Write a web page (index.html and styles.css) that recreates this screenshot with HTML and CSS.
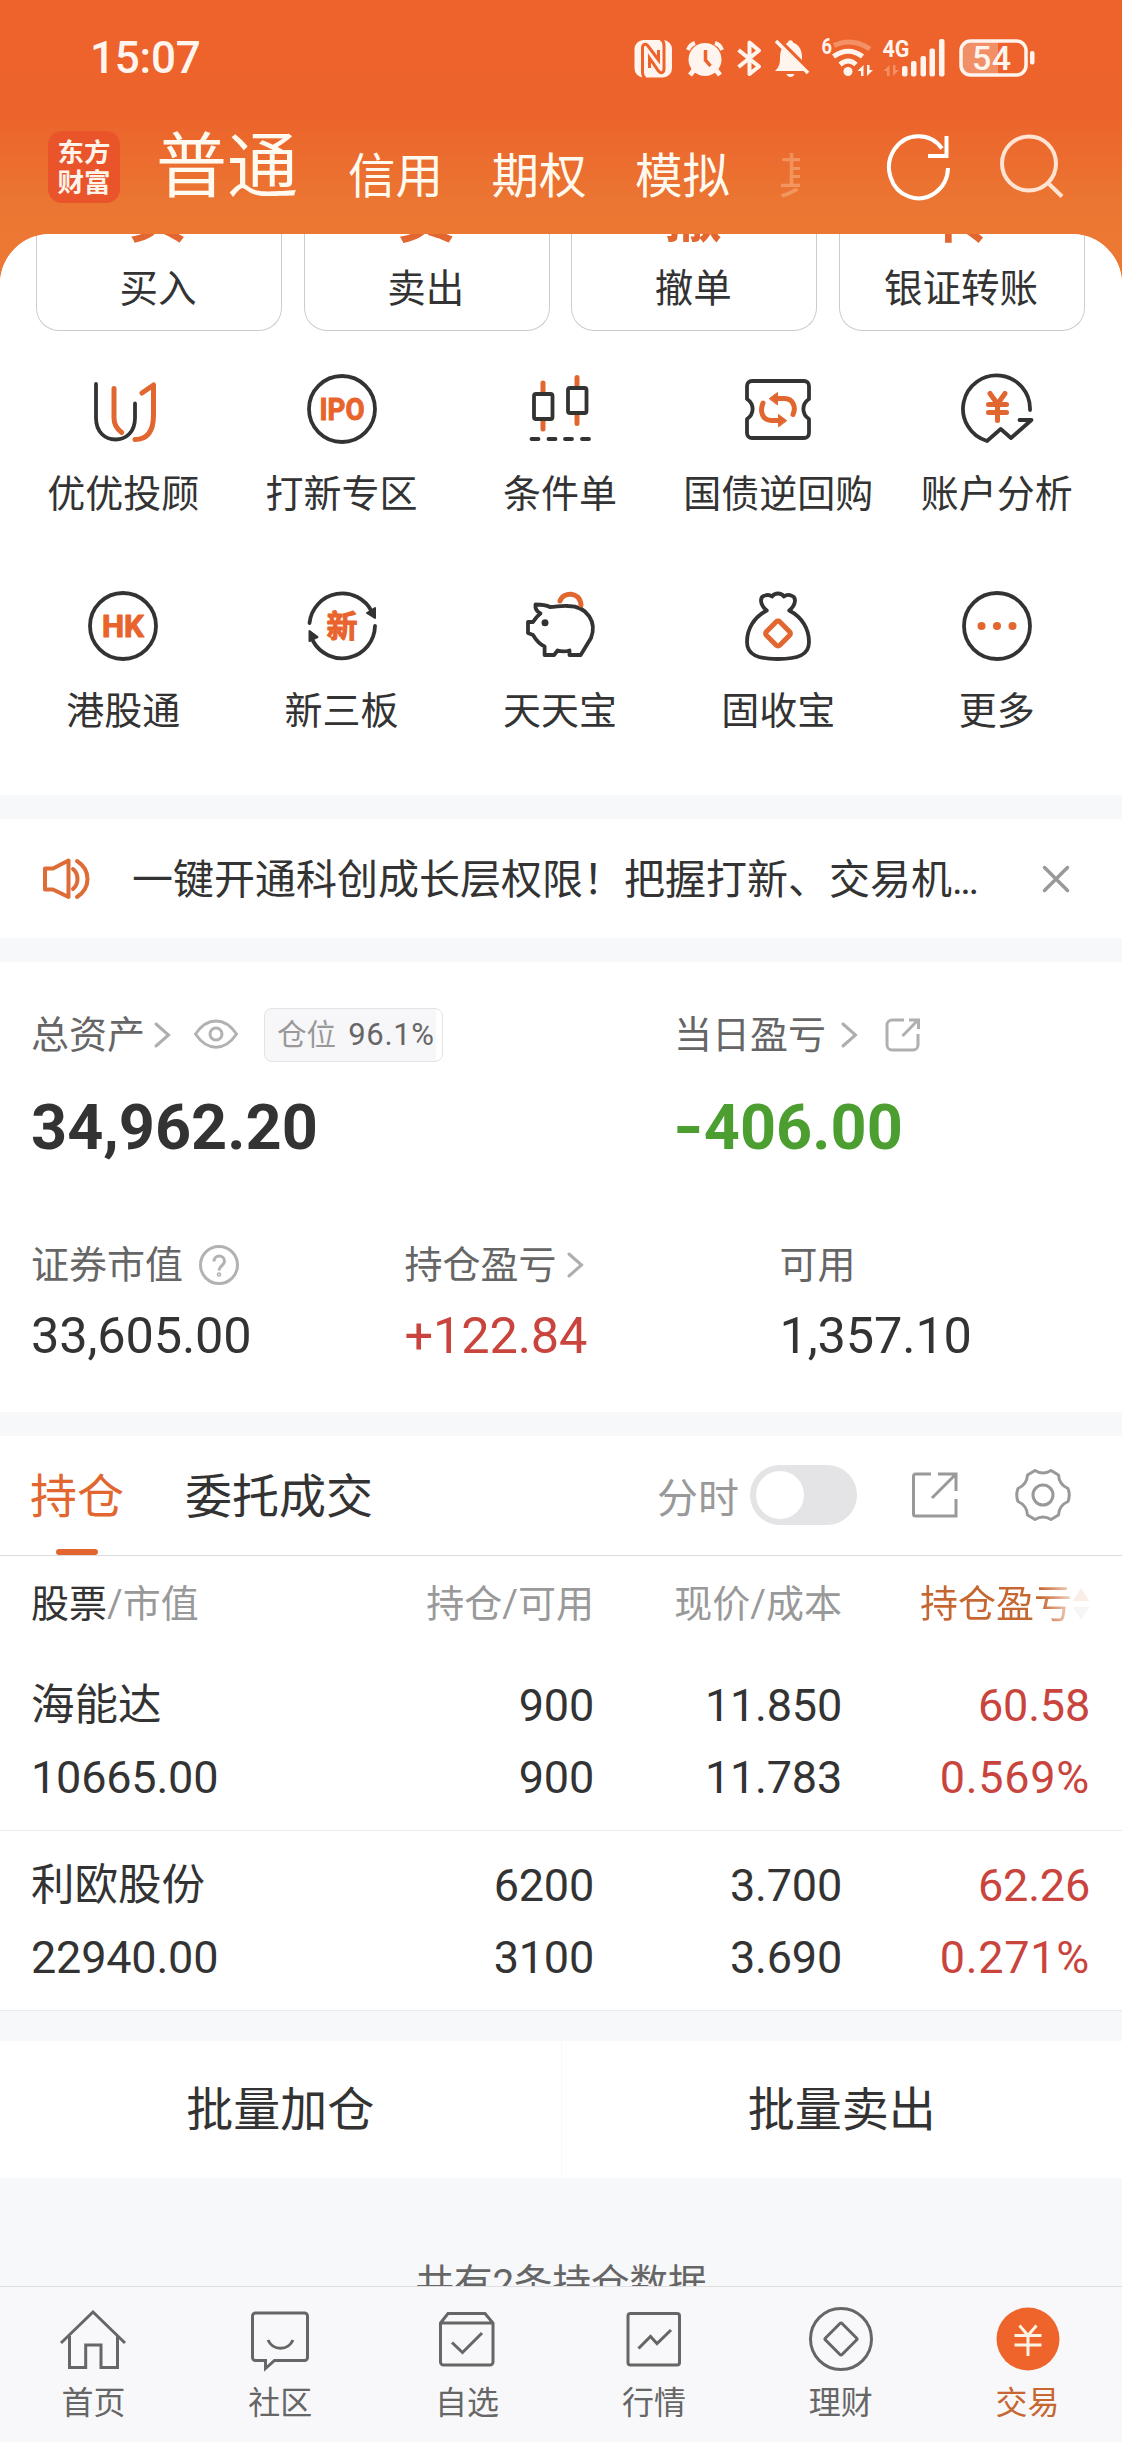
FILE: index.html
```html
<!DOCTYPE html>
<html lang="zh-CN">
<head>
<meta charset="utf-8">
<title>交易</title>
<link rel="stylesheet" href="styles.css">
</head>
<body>
<div class="app">
  <div class="status">
    <span class="clock">15:07</span>
    <svg class="status-icons" width="412" height="55" viewBox="0 0 412 55" fill="none">
      <rect x="9.5" y="10" width="37.5" height="37.5" rx="9" fill="#fff4ee"/>
      <path d="M20.500 48c-2.500-1-3-3-3-6V18c0-4 3-5 5.500-2L33.500 30V20" stroke="#ed632b" stroke-width="3"/>
      <path d="M35.500 9.500c3 1 3.500 3 3.500 6V39c0 4-3 5-5.500 2L24.500 28V38" stroke="#ed632b" stroke-width="3"/>
      <circle cx="80" cy="29.500" r="16.500" fill="#fff4ee"/>
      <path d="M63 20a11 11 0 0 1 7-7M97 20a11 11 0 0 0-7-7" stroke="#fff4ee" stroke-width="4"/>
      <path d="M69 40l-4 5M91 40l4 5" stroke="#fff4ee" stroke-width="5"/>
      <path d="M80.500 20v10l5 6" stroke="#ed632b" stroke-width="3.500"/>
      <path d="M113.500 20L134 36.500L124.500 44V12.500L134 20.500L113.500 37" stroke="#fff4ee" stroke-width="4" stroke-linejoin="round"/>
      <path d="M150 41c4-4 5-7 5-13 0-8 3-13 8-15.500 0-3 5-3 5 0 6 2.500 9 7 9 15v7c1 3 1 4 3 6.500z" fill="#fff4ee"/>
      <path d="M161.500 44h8c-1 4-7 4-8 0z" fill="#fff4ee"/>
      <path d="M152 8l34 34" stroke="#ed632b" stroke-width="4"/>
      <path d="M151 11l32 32" stroke="#fff4ee" stroke-width="3.500"/>
      <text x="196.500" y="23.500" font-size="22" font-weight="700" fill="#fff4ee" textLength="10.500" lengthAdjust="spacingAndGlyphs">6</text>
      <path d="M209 15.500q18-8.500 36 3.500" stroke="#f39065" stroke-width="5"/>
      <path d="M208.500 26.500q15-10.500 29 0" stroke="#fff4ee" stroke-width="5"/>
      <path d="M215 34.500q8.500-7 16 0" stroke="#fff4ee" stroke-width="5"/>
      <circle cx="223" cy="41.500" r="4.500" fill="#fff4ee"/>
      <path d="M232.500 41l6-6v11h-2.500v-5zM248 40l-6 6V35h2.500v5z" fill="#fff4ee"/>
      <text x="257.500" y="27" font-size="24" font-weight="700" fill="#fff4ee" textLength="27" lengthAdjust="spacingAndGlyphs">4G</text>
      <path d="M258.500 41l6-6v11H262v-5zM274 40l-6 6V35h2.500v5z" fill="#f39065"/>
      <g fill="#fff4ee">
        <rect x="277" y="36" width="5.500" height="10.500" rx="2"/><rect x="286" y="31" width="5.500" height="15.500" rx="2"/><rect x="295.500" y="26" width="5.500" height="20.500" rx="2"/><rect x="304.500" y="18.500" width="5.500" height="28" rx="2"/><rect x="314" y="9" width="5.500" height="37.500" rx="2"/>
        <rect x="405" y="21" width="4.500" height="13.500" rx="2"/>
      </g>
      <path d="M346 11h27v34h-27a9 9 0 0 1-9-9V20a9 9 0 0 1 9-9z" fill="#f18f66"/>
      <rect x="336" y="11" width="65" height="34" rx="9.500" stroke="#fff4ee" stroke-width="3.500"/>
      <text x="347" y="40" font-size="34" font-weight="500" fill="#fff4ee" textLength="39">54</text>
    </svg>
  </div>

  <div class="topbar">
    <div class="logo"><span>东方</span><span>财富</span></div>
    <div class="modes">
      <span class="mode mode-on">普通</span>
      <span class="mode">信用</span>
      <span class="mode">期权</span>
      <span class="mode">模拟</span>
      <span class="mode mode-fade">其</span>
    </div>
    <svg class="refresh" width="68" height="72" viewBox="0 0 68 72" fill="none" stroke="#fff" stroke-width="4">
      <path d="M63 37A29.500 31 0 1 1 57 17.500"/><path d="M61.500 5V25H43" />
    </svg>
    <svg class="search" width="68" height="72" viewBox="0 0 68 72" fill="none" stroke="#ffe3d3" stroke-width="4">
      <circle cx="30" cy="32.500" r="27"/><path d="M49 52L63 65.500"/>
    </svg>
  </div>

  <main class="sheet">
    <section class="entries">
      <div class="cards">
        <div class="card"><b>买</b><span>买入</span></div>
        <div class="card"><b>卖</b><span>卖出</span></div>
        <div class="card"><b>撤</b><span>撤单</span></div>
        <div class="card"><b>转</b><span>银证转账</span></div>
      </div>
      <div class="grid">
        <div class="cell">
          <svg class="ico" viewBox="0 0 76 76"><path d="M11 13V47C11 61 20 68.500 30.500 68.500S50 61 50 47V32.500"/><g class="or"><path d="M29 17.500V47c0 7 3 11 7.700 14.500M57 22L68.500 14V44C68.500 59 63 68.500 50 68.500"/></g></svg>
          <span>优优投顾</span>
        </div>
        <div class="cell">
          <svg class="ico" viewBox="0 0 76 76"><circle cx="38" cy="38" r="33"/><text class="tx" x="15.500" y="49" font-size="30.500" textLength="45" lengthAdjust="spacingAndGlyphs">IPO</text></svg>
          <span>打新专区</span>
        </div>
        <div class="cell">
          <svg class="ico" viewBox="0 0 76 76"><g class="or"><path d="M21 12V21M21 49v9M55 6.500v9M55 43v9.500"/></g><rect x="12" y="23" width="18.500" height="25" rx="2"/><rect x="46" y="17" width="18.500" height="25" rx="2"/><path d="M9.500 68h7M26.500 68h7M43 68h7M60 68h7"/></svg>
          <span>条件单</span>
        </div>
        <div class="cell">
          <svg class="ico" viewBox="0 0 76 76"><path d="M12 10H64a5 5 0 0 1 5 5V28c-7.500 5-7.500 15 0 20V62a5 5 0 0 1-5 5H12a5 5 0 0 1-5-5V48c7.500-5 7.500-15 0-20V15a5 5 0 0 1 5-5z"/><g class="or"><path d="M38 27.500h6.500c8 0 12 8 8.500 16"/><path d="M38 49.500h-6.500c-9 0-12-9-8.500-17.500"/></g><path class="fo" d="M29.500 27.500l8-6v12zM46.500 49.500l-8-6v12z"/></svg>
          <span>国债逆回购</span>
        </div>
        <div class="cell">
          <svg class="ico" viewBox="0 0 76 76"><path d="M60.500 49H72.500L52 67L41.700 58L28 70A33.500 33.500 0 1 1 71 39"/><g class="or"><path d="M31 22.500l7.500 10.500 7.500-10.500M38.500 33V49.500M29.500 33.500h18M29.500 41.500h18"/></g></svg>
          <span>账户分析</span>
        </div>
        <div class="cell">
          <svg class="ico" viewBox="0 0 76 76"><circle cx="38" cy="38" r="33"/><text class="tx" x="17" y="49" font-size="30.500" textLength="42" lengthAdjust="spacingAndGlyphs">HK</text></svg>
          <span>港股通</span>
        </div>
        <div class="cell">
          <svg class="ico" viewBox="0 0 76 76"><path d="M5.500 35A33 33 0 0 1 68 24M71 38A33 33 0 0 1 9 53"/><path class="fd" d="M71 20v10l-8-5zM5.500 43v10l8-4z"/><text class="tx" x="22.500" y="49" font-size="31">新</text></svg>
          <span>新三板</span>
        </div>
        <div class="cell">
          <svg class="ico" viewBox="0 0 76 76"><path d="M28 19C24 17 20 16.500 13.500 16.500 13 20 14 23 18.500 25.500 15 28 13 31 11 34H6V45l5 2c3 5 6 9 11.600 11.500V67h9.500l3.500-4.500C40 64 44 63.500 47.500 62.500V67H58.700L69 50C75 35 66 18 46 18 39 17.500 34 19 28 19z"/><circle class="fd" cx="23" cy="34.700" r="2.500"/><g class="or"><path d="M38 13c3-9.500 20-10 21 4"/></g></svg>
          <span>天天宝</span>
        </div>
        <div class="cell">
          <svg class="ico" viewBox="0 0 76 76"><path d="M26.800 22.500C20 17 19 9 25 7.500 28 6.500 30 7 32 8.500 35 4.500 41 4.500 44 8.500 46 7 49 6.500 51 7.500 57 9 56 17 49.200 22.500 62 29 69 41 69 54 69 67 58 71 38 71S7 67 7 54C7 41 14 29 26.800 22.500z"/><g class="or"><rect x="28.500" y="36" width="19" height="19" rx="2.500" transform="rotate(45 38 45.500)"/></g></svg>
          <span>固收宝</span>
        </div>
        <div class="cell">
          <svg class="ico" viewBox="0 0 76 76"><circle cx="38" cy="38" r="33"/><g class="fo"><circle cx="22.500" cy="38" r="4"/><circle cx="38" cy="38" r="4"/><circle cx="53.500" cy="38" r="4"/></g></svg>
          <span>更多</span>
        </div>
      </div>
    </section>

    <section class="notice">
      <svg width="50" height="46" viewBox="0 0 50 46" fill="none" stroke="#dd6c36" stroke-width="4" stroke-linejoin="round" stroke-linecap="round"><path d="M4 12.500H12L27.500 4.500V41L12 33.500H4z"/><path d="M32 13c6 5 6 15 0 20M36 5c14 9 14 27 0 36"/></svg>
      <p>一键开通科创成长层权限！把握打新、交易机<em>...</em></p>
      <svg width="30" height="30" viewBox="0 0 30 30" stroke="#999" stroke-width="3.500" stroke-linecap="round"><path d="M3.500 3.500l23 23M26.500 3.500l-23 23"/></svg>
    </section>

    <section class="assets">
      <div class="totals">
        <div>
          <div class="label"><span>总资产</span><svg class="chev c1" viewBox="0 0 18 28"><path d="M3 3l12.500 11L3 25"/></svg>
            <svg class="eye" viewBox="0 0 46 32"><path d="M2.500 16C14-1.500 32-1.500 43.500 16C32 33.500 14 33.500 2.500 16z"/><circle cx="23" cy="16" r="6"/></svg>
            <span class="badge">仓位 <em>96.1%</em></span></div>
          <div class="big">34,962.20</div>
        </div>
        <div>
          <div class="label"><span>当日盈亏</span><svg class="chev c2" viewBox="0 0 18 28"><path d="M3 3l12.500 11L3 25"/></svg>
            <svg class="share-s" viewBox="0 0 36 36"><path d="M19 3H7a5 5 0 0 0-5 5V28a5 5 0 0 0 5 5H28a5 5 0 0 0 5-5V17M24 3h9.500V12M33 3L17.500 19"/></svg></div>
          <div class="big green"><span class="minus">-</span>406.00</div>
        </div>
      </div>
      <div class="details">
        <div><div class="label"><span>证券市值</span><svg class="help" viewBox="0 0 42 42"><circle cx="21" cy="21" r="18.500"/><path d="M16 17.500c0-7.500 10.500-7 10.500-.5 0 5-5.500 4.500-5.500 9.500"/><circle cx="21" cy="30.500" r=".8"/></svg></div><div class="num">33,605.00</div></div>
        <div><div class="label"><span>持仓盈亏</span><svg class="chev c3" viewBox="0 0 18 28"><path d="M3 3l12.500 11L3 25"/></svg></div><div class="num red">+122.84</div></div>
        <div><div class="label"><span>可用</span></div><div class="num">1,357.10</div></div>
      </div>
    </section>

    <section class="positions">
      <div class="tabs">
        <span class="tab tab-on">持仓</span><span class="tab">委托成交</span>
        <span class="tick">分时</span><span class="toggle"><i></i></span>
        <svg class="share-l" viewBox="0 0 50 50"><path d="M21 3H5.500a2 2 0 0 0-2 2V43a2 2 0 0 0 2 2H46V28M46 20V3H28M46 3L22 27"/></svg>
        <svg class="gear" viewBox="0 0 58 58"><path d="M21 4.500Q29 9.500 37 4.500L44.500 9Q45 18.500 54 22.500 56.500 29 54 35.500 45 39.500 44.500 49L37 53.500Q29 48.500 21 53.500L13.500 49Q13 39.500 4 35.500 1.500 29 4 22.500 13 18.500 13.500 9z"/><circle cx="29" cy="29" r="10"/></svg>
      </div>
      <div class="row head">
        <span><b>股票</b>/市值</span><span>持仓/可用</span><span>现价/成本</span>
        <span class="sorted">持仓盈亏<svg width="18" height="32" viewBox="0 0 18 32"><path d="M9 0l8.500 13H.5z" fill="#faeee6"/><path d="M9 32l8.500-13H.5z" fill="#f6f6f6"/></svg></span>
      </div>
      <div class="row">
        <span class="name">海能达</span><span>900</span><span>11.850</span><span class="red">60.58</span>
        <span>10665.00</span><span>900</span><span>11.783</span><span class="red pct">0.569%</span>
      </div>
      <div class="row">
        <span class="name">利欧股份</span><span>6200</span><span>3.700</span><span class="red">62.26</span>
        <span>22940.00</span><span>3100</span><span>3.690</span><span class="red pct">0.271%</span>
      </div>
    </section>

    <section class="batch"><span>批量加仓</span><span>批量卖出</span></section>
    <p class="count">共有2条持仓数据</p>
  </main>

  <nav class="nav">
    <div><svg viewBox="0 0 68 68"><path d="M2 38L34 7L66 38M10.500 31V62.500H26.700V40H42V62.500H58.500V31"/></svg><span>首页</span></div>
    <div><svg viewBox="0 0 68 68"><path d="M9.500 8H58.500a3 3 0 0 1 3 3V52.500a3 3 0 0 1-3 3H28.500L19.500 63.500V55.500H9.500a3 3 0 0 1-3-3V11a3 3 0 0 1 3-3zM22 35c5 11 20 11 25 0"/></svg><span>社区</span></div>
    <div><svg viewBox="0 0 68 68"><path d="M7.500 18L15 8.500H52L60 18V57a3 3 0 0 1-3 3H10.500a3 3 0 0 1-3-3zM7.500 18H60M19 37.500L29.500 47.500L49 28"/></svg><span>自选</span></div>
    <div><svg viewBox="0 0 68 68"><rect x="8" y="8.500" width="51.500" height="51.500" rx="2.500"/><path d="M18.500 43.500L30.500 31.500L37 38.500L51 25"/></svg><span>行情</span></div>
    <div><svg viewBox="0 0 68 68"><circle cx="34" cy="34" r="30.500"/><rect x="22.300" y="22.300" width="23.400" height="23.400" rx="1.500" transform="rotate(45 34 34)"/></svg><span>理财</span></div>
    <div class="nav-on"><svg viewBox="0 0 68 68"><circle class="disc" cx="34" cy="34" r="31.500"/><path class="yen" d="M25.500 20.500L34 30.500L42.500 20.500M34 30.500V51M20.500 30.500H47.500M20.500 40H47.500"/></svg><span>交易</span></div>
  </nav>
</div>
</body>
</html>
```
FILE: styles.css
```css
* { box-sizing: border-box; }
body { margin: 0; font-family: Roboto, "Noto Sans CJK SC", sans-serif; color: #333; }
b, em { font-weight: inherit; font-style: normal; }
p { margin: 0; }
svg { display: block; flex: none; }
.app {
  width: 1122px; height: 2442px; overflow: hidden;
  display: flex; flex-direction: column;
  background: linear-gradient(#ee632b 0, #ec632b 112px, #eb7532 200px, #ec7834 240px, #ed7834 100%);
}

/* status bar */
.status { height: 100px; flex: none; display: flex; justify-content: space-between; padding: 30px 85px 0 90px; }
.clock { font-size: 44px; font-weight: 500; line-height: 57px; color: #fff4ee; letter-spacing: -.2px; }

/* top bar */
.topbar { height: 134px; flex: none; display: flex; padding-left: 48px; color: #fffaf0; }
.logo {
  width: 72px; height: 72px; margin-top: 31px; border-radius: 14px; background: #ea542b; flex: none;
  display: flex; flex-direction: column; align-items: center; justify-content: center;
  font: 700 26.500px/30px "Noto Sans CJK SC", sans-serif; color: #fff3ea; padding-bottom: 2px;
}
.modes { display: flex; width: 680px; overflow: hidden; padding: 27px 0 0 36px; white-space: nowrap; }
.mode { font-size: 47.500px; line-height: 46px; margin: 27px 48.500px 0 0; }
.mode-on { font-size: 71px; line-height: 80px; margin: 0 50px 0 0; }
.mode-fade { color: rgba(255, 220, 180, .35); }
.refresh { margin: 31px 0 0 85px; }
.search { margin: 31px 0 0 46px; }

/* content sheet */
.sheet { flex: 1; min-height: 0; overflow: hidden; background: #f7f8fa; border-radius: 50px 50px 0 0; }
.entries { background: #fff; height: 561px; }
.cards { display: grid; grid-template-columns: repeat(4, 246px); justify-content: space-between; padding: 0 37px 0 36px; }
.card {
  height: 97px; border: 1px solid #ccc; border-top: 0; border-radius: 0 0 23px 23px;
  display: flex; flex-direction: column; align-items: center; overflow: hidden; padding-right: 2px;
}
.card b { font-size: 58px; font-weight: 700; line-height: 60px; margin-top: -47px; color: #e2662f; }
.card span { font-size: 38.500px; line-height: 46px; margin-top: 19px; }
.grid { display: grid; grid-template-columns: repeat(5, 218.400px); grid-auto-rows: 217px; padding: 39.500px 14px 0; }
.cell { display: flex; flex-direction: column; align-items: center; }
.cell span { font-size: 38px; line-height: 46px; margin-top: 24px; }
.ico { width: 76px; height: 76px; fill: none; stroke: #333; stroke-width: 3.800; stroke-linecap: round; stroke-linejoin: round; }
.ico .or { stroke: #e2662f; stroke-width: 5; }
.ico .fo { fill: #e2662f; stroke: #e2662f; stroke-width: 1; }
.ico .fo circle { stroke: none; }
.ico .fd { fill: #333; stroke-width: 2; }
.ico .tx { fill: #e8642c; stroke: #e8642c; stroke-width: 1; font-weight: 700; }

/* notice */
.notice { height: 119px; margin: 24px 0; background: #fff; display: flex; align-items: center; padding: 0 0 0 41px; }
.notice p { font-size: 41px; line-height: 50px; width: 860px; margin: 2px 49px 0 41px; white-space: nowrap; }
.notice em { letter-spacing: -2.500px; }

/* assets */
.assets { background: #fff; height: 449.500px; padding: 45px 31px 0; }
.totals { display: grid; grid-template-columns: 643px 1fr; height: 229.500px; }
.details { display: grid; grid-template-columns: 373.500px 375px 1fr; }
.label { display: flex; align-items: center; height: 56px; font-size: 38px; line-height: 56px; color: #666; }
.chev { width: 18px; height: 28px; fill: none; stroke: #aeaeae; stroke-width: 3; stroke-linecap: round; }
.c1 { margin-left: 8px; }
.c2 { margin-left: 14px; }
.c3 { margin-left: 9px; }
.eye { width: 46px; height: 32px; margin: -3px 0 0 22px; fill: none; stroke: #b2b2b2; stroke-width: 3; }
.badge {
  margin-left: 25px; width: 179px; height: 54px; border: 1px solid #e3e3e6; border-radius: 8px; padding-left: 12px;
  background: linear-gradient(90deg, #f7f7fa 171px, #fff 171px); font-size: 29.500px; line-height: 51px; color: #999; white-space: nowrap;
}
.badge em { font-size: 31px; color: #666; margin-left: 5px; letter-spacing: .6px; }
.share-s { width: 36px; height: 36px; margin-left: 27px; fill: none; stroke: #b0b0b0; stroke-width: 3; }
.big { font-size: 63px; font-weight: 700; line-height: 70px; margin-top: 30px; }
.minus { display: inline-block; transform: scaleX(1.25); margin: 0 3px 0 2px; }
.help { width: 42px; height: 42px; margin-left: 15px; fill: none; stroke: #b2b2b2; stroke-width: 3; }
.num { font-size: 50.500px; line-height: 60px; margin-top: 13px; letter-spacing: -.15px; }
.big, .num { white-space: nowrap; }
.green { color: #4b9e2f; }
.red { color: #c9443d; }

/* positions */
.positions { margin-top: 24px; background: #fff; }
.tabs { height: 120px; border-bottom: 1px solid #dcdcdc; display: flex; align-items: center; padding-left: 30px; }
.tab { font-size: 47px; line-height: 121px; height: 119px; display: flex; flex-direction: column; align-items: center; margin-right: 61px; }
.tab-on { color: #e2662f; }
.tab-on::after { content: ""; width: 42px; height: 6px; border-radius: 3px; background: #e2662f; margin-top: -8px; flex: none; }
.tick { font-size: 41px; color: #999; margin-left: 223px; }
.toggle { width: 107px; height: 60px; border-radius: 30px; background: #e4e4e7; margin-left: 11px; padding: 6px; }
.toggle i { display: block; width: 48px; height: 48px; border-radius: 50%; background: #fff; }
.share-l { width: 50px; height: 50px; margin: 2px 0 0 53px; fill: none; stroke: #999; stroke-width: 3; }
.gear { width: 58px; height: 58px; margin-left: 54px; fill: none; stroke: #999; stroke-width: 3; stroke-linejoin: round; }
.row {
  display: grid; grid-template-columns: 315px repeat(3, 248px); padding: 19px 0 15px 31px; grid-auto-rows: 72px; line-height: 72px;
  height: 180px; border-bottom: 1px solid #ebebeb; font-size: 45px; letter-spacing: -.2px; text-align: right; white-space: nowrap;
}
.row > :nth-child(4n + 1) { text-align: left; }
.row .name { font-size: 43.500px; letter-spacing: 0; }
.row .pct { letter-spacing: .7px; }
.head { height: 95px; padding-top: 12px; padding-bottom: 0; border: 0; color: #999; font-size: 38px; letter-spacing: 0; }
.head b { color: #333; }
.sorted { display: flex; align-items: center; justify-content: flex-end; background: linear-gradient(90deg, #c66630 198px, #f5ddd0 232px); -webkit-background-clip: text; background-clip: text; color: transparent; }

/* batch actions */
.batch { display: grid; grid-template-columns: 1fr 1fr; gap: 1px; margin-top: 30px; height: 137px; }
.batch span { background: #fff; font-size: 47px; line-height: 138px; height: 137px; text-align: center; }
.count { font-size: 38.500px; line-height: 46px; margin-top: 83px; text-align: center; color: #666; }

/* bottom navigation */
.nav { height: 156px; flex: none; background: #f8f8fa; border-top: 1px solid #dfdfe2; display: grid; grid-template-columns: repeat(6, 1fr); padding-right: 1px; color: #666; }
.nav div { display: flex; flex-direction: column; align-items: center; padding-top: 18px; }
.nav svg { width: 68px; height: 68px; fill: none; stroke: #666; stroke-width: 3; }
.nav span { font-size: 32px; line-height: 40px; margin-top: 10px; }
.nav .nav-on { color: #c66630; }
.nav .disc { fill: #ee642b; stroke: none; }
.nav .yen { stroke: #fff3e6; }
```
